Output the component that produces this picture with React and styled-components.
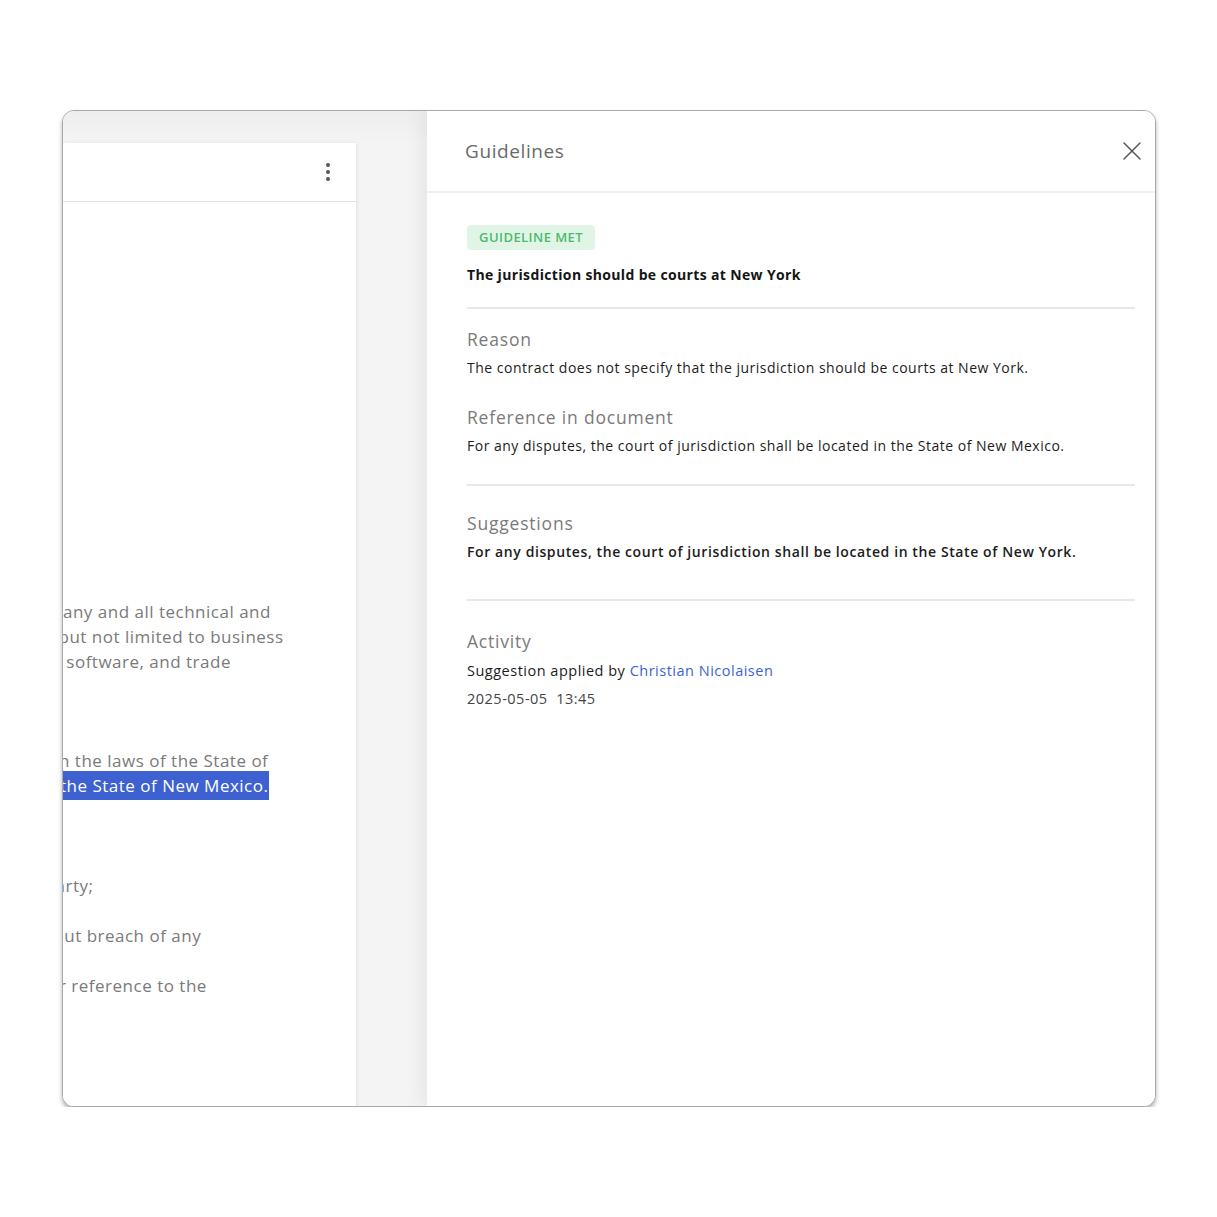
import React from "react";
import styled, { createGlobalStyle } from "styled-components";

const GlobalStyle = createGlobalStyle`
  html, body {
    margin: 0;
    padding: 0;
    background: #ffffff;
  }
  body {
    font-family: "Open Sans", "Liberation Sans", sans-serif;
  }
`

const Page = styled.div`
  padding: 110px 0 0 62px;
`

const Frame = styled.div`
  width: 1092px;
  height: 995px;
  border: 1px solid #a9a9a9;
  border-radius: 12px;
  overflow: hidden;
  display: flex;
  background: #f4f4f4;
  box-shadow: 0 3px 4px rgba(0, 0, 0, 0.3);
`

const DocPane = styled.div`
  width: 364px;
  flex-shrink: 0;
  padding-top: 32px;
  box-sizing: border-box;
  overflow: hidden;
  background: linear-gradient(to bottom, #eeeeee 0, #f4f4f4 32px);
`

const DocCard = styled.div`
  width: 293px;
  height: 100%;
  background: #ffffff;
  box-shadow: 1px 0 3px rgba(0, 0, 0, 0.08);
  display: flex;
  flex-direction: column;
  overflow: hidden;
`

const CardHeader = styled.div`
  height: 58px;
  flex-shrink: 0;
  border-bottom: 1px solid #e3e3e3;
  display: flex;
  align-items: center;
  justify-content: flex-end;
  padding-right: 26px;
`

const Kebab = styled.div`
  display: flex;
  flex-direction: column;
  gap: 3px;
  span {
    width: 4px;
    height: 4px;
    border-radius: 50%;
    background: #555;
  }
`

const CardBody = styled.div`
  padding-top: 397px;
`

const DocLine = styled.div`
  white-space: nowrap;
  font-family: "Open Sans", "Liberation Sans", sans-serif;
  font-size: 17px;
  letter-spacing: 0.5px;
  line-height: 25px;
  color: #7a7a7a;
  margin-left: ${(p) => p.$shift || 0}px;
  margin-top: ${(p) => p.$gap || 0}px;
`

const Highlight = styled.span`
  background: #3d61d1;
  color: #ffffff;
  padding: 3px 1px 3px 4px;
`

const Drawer = styled.div`
  flex: 1;
  background: #ffffff;
  box-shadow: -8px 0 16px rgba(0, 0, 0, 0.05);
  display: flex;
  flex-direction: column;
  font-family: "Open Sans", "Liberation Sans", sans-serif;
`

const DrawerHeader = styled.div`
  height: 80px;
  border-bottom: 2px solid #f0f0f2;
  display: flex;
  align-items: center;
  justify-content: space-between;
  padding: 0 13px 0 38px;
`

const DrawerTitle = styled.h2`
  margin: 0;
  font-size: 19px;
  font-weight: 400;
  letter-spacing: 0.6px;
  color: #6a6a6a;
`

const CloseButton = styled.button`
  border: none;
  background: none;
  padding: 0;
  width: 20px;
  height: 20px;
  display: flex;
  cursor: pointer;
`

const Content = styled.div`
  padding: 32px 20px 0 40px;
`

const Section = styled.div`
  padding: ${(p) => p.$pad || "0"};
  border-bottom: ${(p) => (p.$last ? "none" : "2px solid #e6e7ef")};
`

const Badge = styled.span`
  display: inline-block;
  height: 25px;
  line-height: 25px;
  padding: 0 12px;
  border-radius: 4px;
  background: #e1f5e7;
  color: #4cbb6c;
  font-size: 13px;
  font-weight: 600;
  letter-spacing: 0.45px;
`

const RuleTitle = styled.div`
  margin-top: 15px;
  font-size: 14px;
  line-height: 20px;
  font-weight: 700;
  letter-spacing: 0.35px;
  color: #151515;
`

const Label = styled.div`
  margin-top: ${(p) => p.$gap || 0}px;
  font-size: 17.5px;
  line-height: 24px;
  letter-spacing: 0.8px;
  color: #7a7a7a;
`

const Body = styled.div`
  margin-top: ${(p) => p.$gap || 7}px;
  font-size: ${(p) => p.$size || 14}px;
  line-height: 20px;
  letter-spacing: ${(p) => (p.$strong ? 0.6 : 0.5)}px;
  color: ${(p) => (p.$muted ? "#444" : "#1c1c1c")};
  font-weight: ${(p) => (p.$strong ? 600 : 400)};
`

const Person = styled.a`
  color: #3b63d9;
  text-decoration: none;
`

export default function App() {
  return (
    <>
      <GlobalStyle />
      <Page>
        <Frame>
          <DocPane>
            <DocCard>
              <CardHeader>
                <Kebab>
                  <span />
                  <span />
                  <span />
                </Kebab>
              </CardHeader>
              <CardBody>
                <DocLine $shift={0}>any and all technical and</DocLine>
                <DocLine $shift={-4.5}>but not limited to business</DocLine>
                <DocLine $shift={-6.5}>, software, and trade</DocLine>
                <DocLine $shift={-4} $gap={74}>h the laws of the State of</DocLine>
                <DocLine $shift={-7}>
                  <Highlight>the State of New Mexico.</Highlight>
                </DocLine>
                <DocLine $shift={-7.5} $gap={75}>arty;</DocLine>
                <DocLine $shift={-9.5} $gap={25}>out breach of any</DocLine>
                <DocLine $shift={-4} $gap={25}>r reference to the</DocLine>
              </CardBody>
            </DocCard>
          </DocPane>
          <Drawer>
            <DrawerHeader>
              <DrawerTitle>Guidelines</DrawerTitle>
              <CloseButton aria-label="Close">
                <svg width="20" height="20" viewBox="0 0 20 20">
                  <path d="M2 2 L18 18 M18 2 L2 18" stroke="#555" strokeWidth="1.5" strokeLinecap="round" />
                </svg>
              </CloseButton>
            </DrawerHeader>
            <Content>
              <Section $pad="0 0 22px">
                <Badge>GUIDELINE MET</Badge>
                <RuleTitle>The jurisdiction should be courts at New York</RuleTitle>
              </Section>
              <Section $pad="18px 0 28px">
                <Label>Reason</Label>
                <Body>The contract does not specify that the jurisdiction should be courts at New York.</Body>
                <Label $gap={27}>Reference in document</Label>
                <Body>For any disputes, the court of jurisdiction shall be located in the State of New Mexico.</Body>
              </Section>
              <Section $pad="25px 0 37px">
                <Label>Suggestions</Label>
                <Body $strong>For any disputes, the court of jurisdiction shall be located in the State of New York.</Body>
              </Section>
              <Section $pad="28px 0 0" $last>
                <Label>Activity</Label>
                <Body $gap={8} $size={14.5}>
                  Suggestion applied by <Person href="#">Christian Nicolaisen</Person>
                </Body>
                <Body $gap={8} $size={14.5} $muted>2025-05-05&nbsp; 13:45</Body>
              </Section>
            </Content>
          </Drawer>
        </Frame>
      </Page>
    </>
  );
}
